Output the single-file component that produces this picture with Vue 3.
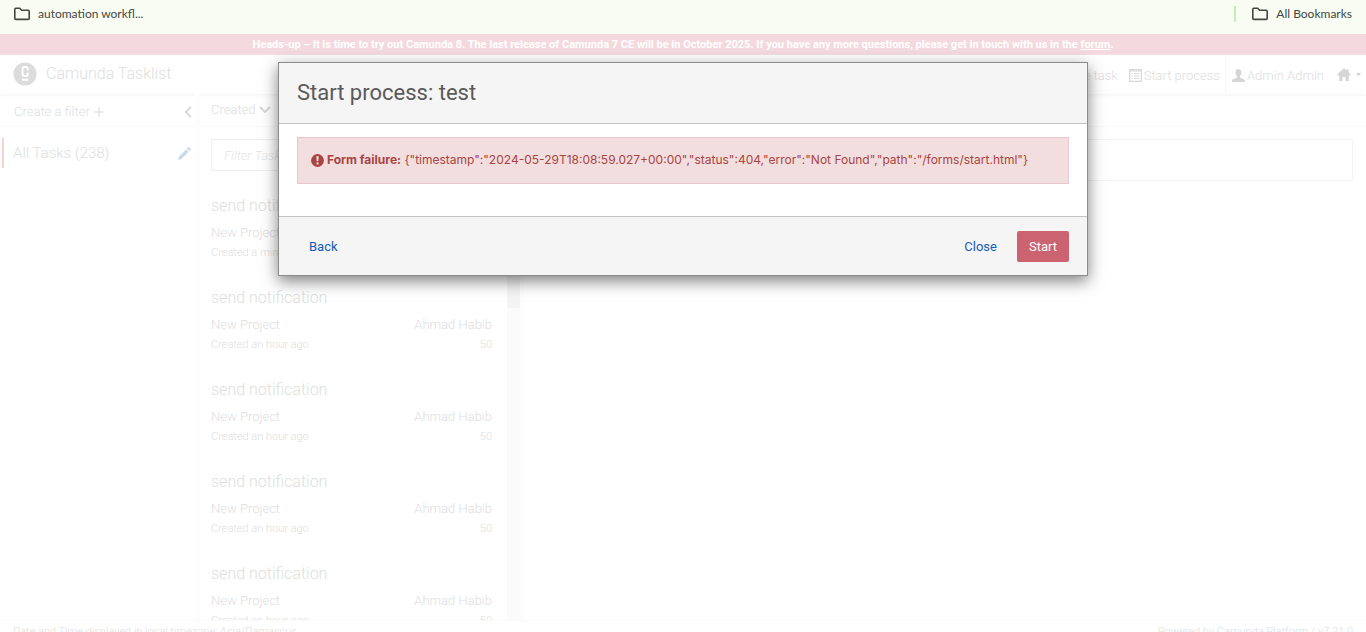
<script setup>
import { ref } from 'vue'

const query = ref('')
const tasks = [
  { name: 'send notification', process: 'New Project', assignee: 'Ahmad Habib', created: 'Created a minute ago', priority: 50 },
  { name: 'send notification', process: 'New Project', assignee: 'Ahmad Habib', created: 'Created an hour ago', priority: 50 },
  { name: 'send notification', process: 'New Project', assignee: 'Ahmad Habib', created: 'Created an hour ago', priority: 50 },
  { name: 'send notification', process: 'New Project', assignee: 'Ahmad Habib', created: 'Created an hour ago', priority: 50 },
  { name: 'send notification', process: 'New Project', assignee: 'Ahmad Habib', created: 'Created an hour ago', priority: 50 }
]
const failure = '{"timestamp":"2024-05-29T18:08:59.027+00:00","status":404,"error":"Not Found","path":"/forms/start.html"}'
</script>

<template>
  <div class="window">
    <nav class="bookmarks" aria-label="Bookmarks">
      <button type="button" class="bookmark">
        <svg width="18" height="14" viewBox="0 0 18 14"><path d="M1.8 2.2q0-1 1-1h4l1.8 2h6.600q1 0 1 1v7.200q0 1-1 1H2.800q-1 0-1-1z" fill="none" stroke="#454743" stroke-width="1.600" /></svg>
        <span>automation workfl...</span>
      </button>
      <button type="button" class="bookmark all">
        <svg width="18" height="14" viewBox="0 0 18 14"><path d="M1.8 2.2q0-1 1-1h4l1.800 2h6.600q1 0 1 1v7.200q0 1-1 1H2.800q-1 0-1-1z" fill="none" stroke="#454743" stroke-width="1.600" /></svg>
        <span>All Bookmarks</span>
      </button>
    </nav>

    <div class="app">
      <p class="notice">
        Heads-up – it is time to try out Camunda 8. The last release of Camunda 7 CE will be in October 2025. If you have any more questions, please get in touch with us in the <a href="#">forum</a>.
      </p>

      <header class="topbar">
        <a class="brand" href="#">
          <svg width="24" height="24" viewBox="0 0 24 24">
            <circle cx="12" cy="12" r="11.500" fill="#dcdcdc" />
            <path d="M14.700 8.500V6.700q0-1.700-1.700-1.700h-1.600q-1.800 0-1.800 1.700v5.600q0 1.700 1.800 1.700H13q1.700 0 1.700-1.700v-1.700M9 17.800h6.300" fill="none" stroke="#fff" stroke-width="1.900" />
          </svg>
          <span>Camunda Tasklist</span>
        </a>
        <nav class="actions" aria-label="Main">
          <a href="#" class="action">
            <svg width="13" height="13" viewBox="0 0 13 13"><path d="M1 1h11v11H1zM4 4h6M4 6.500h6M4 9h6" fill="none" stroke="#dedede" /></svg>
            <span>Create task</span>
          </a>
          <a href="#" class="action process">
            <svg width="13" height="13" viewBox="0 0 13 13"><path d="M.6.600h11.800v11.800H.600zM.6 2h11.800" fill="none" stroke="#d8d8d8" stroke-width="1.200" /><path d="M2.500 4.500h1.200M5 4.500h5.500M2.500 7h1.200M5 7h5.500M2.500 9.500h1.200M5 9.500h5.500" stroke="#d8d8d8" stroke-width="1.200" /></svg>
            <span>Start process</span>
          </a>
          <a href="#" class="action user">
            <svg width="13" height="13" viewBox="0 0 13 13"><path d="M6.500 0C8.500 0 9.600 1.300 9.500 3.400 9.400 5 8.800 6.200 8 6.900v1.300c0 .9 4.600 1.400 4.900 3.200V13H.1v-1.600C.4 9.600 5 9.100 5 8.200V6.900C4.200 6.200 3.600 5 3.500 3.400 3.400 1.300 4.500 0 6.500 0z" fill="#d6d6d6" /></svg>
            <span>Admin Admin</span>
          </a>
          <button type="button" class="home" aria-label="Applications">
            <svg width="14" height="13" viewBox="0 0 14 13"><path d="M7 0l2.500 2.400V1h2v3.300L14 6.800l-.7.700h-1.500V13H8.500V9h-3v4H2.200V7.500H.7L0 6.800z" fill="#d6d6d6" /></svg>
            <svg width="5" height="3" viewBox="0 0 5 3"><path d="M0 0h5L2.500 3z" fill="#d0d0d0" /></svg>
          </button>
        </nav>
      </header>

      <main class="columns">
        <aside class="filters">
          <div class="column-head">
            <button type="button" class="plain">Create a filter
              <svg width="10" height="10" viewBox="0 0 10 10"><path d="M5 0v10M0 5h10" stroke="#dcdcdc" stroke-width="1.200" /></svg>
            </button>
            <button type="button" class="plain" aria-label="Collapse filters">
              <svg width="8" height="12" viewBox="0 0 8 12"><path d="M7 .8L1.800 6 7 11.200" fill="none" stroke="#d6d6d6" stroke-width="1.800" /></svg>
            </button>
          </div>
          <div class="filter">
            <a href="#">All Tasks (238)</a>
            <button type="button" class="plain" aria-label="Edit filter">
              <svg width="13" height="13" viewBox="0 0 13 13"><path d="M0 13l1-3.400L8.200 2.400l2.400 2.400L3.400 12zM9 1.600L10.400.200q.4-.3.800 0l1.600 1.600q.3.400 0 .8L11.400 4z" fill="#cbd8ea" /></svg>
            </button>
          </div>
        </aside>

        <section class="list">
          <div class="column-head">
            <button type="button" class="plain sort">Created
              <svg width="12" height="8" viewBox="0 0 12 8"><path d="M1 1l5 5 5-5" fill="none" stroke="#d6d6d6" stroke-width="1.900" /></svg>
            </button>
          </div>
          <div class="list-body">
            <div class="tasks">
              <input v-model="query" class="search" type="text" aria-label="Filter Tasks" placeholder="Filter Tasks">
              <ul>
                <li v-for="(task, i) in tasks" :key="i">
                  <h4>{{ task.name }}</h4>
                  <div class="row"><span>{{ task.process }}</span><span>{{ task.assignee }}</span></div>
                  <div class="row small"><span>{{ task.created }}</span><span>{{ task.priority }}</span></div>
                </li>
              </ul>
            </div>
            <div class="track"><div class="thumb"></div></div>
          </div>
        </section>

        <section class="detail">
          <div class="column-head"></div>
          <div class="empty"></div>
        </section>
      </main>

      <footer class="footer">
        <span>Date and Time displayed in local timezone: Asia/Damascus</span>
        <span>Powered by <a href="#">Camunda Platform</a> / v7.21.0</span>
      </footer>
    </div>

    <div class="dialog" role="dialog" aria-labelledby="dialog-title">
      <div class="dialog-head"><h3 id="dialog-title">Start process: test</h3></div>
      <div class="dialog-body">
        <div class="alert" role="alert">
          <svg width="13" height="13" viewBox="0 0 13 13"><circle cx="6.500" cy="6.500" r="6.400" fill="#a94442" /><path d="M5.300 2.300h2.400l-.4 5H5.700zM5.500 8.600h2v2h-2z" fill="#f2dede" /></svg>
          <p><strong>Form failure:</strong> {{ failure }}</p>
        </div>
      </div>
      <div class="dialog-foot">
        <button type="button" class="btn link">Back</button>
        <div class="right">
          <button type="button" class="btn link">Close</button>
          <button type="button" class="btn primary">Start</button>
        </div>
      </div>
    </div>
  </div>
</template>

<style>
body {
  background: #fff;
}
</style>

<style scoped>
* {
  box-sizing: border-box;
}
.window {
  position: relative;
  display: flex;
  flex-direction: column;
  height: 100vh;
  overflow: hidden;
  font-family: Roboto, "Liberation Sans", sans-serif;
  font-size: 13px;
  line-height: 18px;
}
button {
  border: 0;
  background: none;
  padding: 0;
  font: inherit;
  color: inherit;
}
a {
  color: inherit;
  text-decoration: none;
}
h3,
h4,
p,
ul {
  margin: 0;
  padding: 0;
  font-weight: 300;
  list-style: none;
}
svg {
  flex: none;
}
.bookmarks {
  display: flex;
  justify-content: space-between;
  align-items: center;
  flex: none;
  height: 34px;
  padding: 0 14px 6px 13px;
  background: #f8fcf2;
  color: #454743;
  font-family: Lato, "Open Sans", sans-serif;
  font-size: 12px;
}
.bookmark {
  display: flex;
  align-items: center;
  gap: 7px;
}
.all {
  padding-left: 15px;
  border-left: 2px solid #c5ecb8;
  line-height: 16px;
}
.app {
  display: flex;
  flex-direction: column;
  flex: 1;
  min-height: 0;
  color: #dedede;
  font-weight: 300;
}
.notice {
  flex: none;
  padding: 0 12px;
  height: 21px;
  line-height: 22px;
  background: #f4dade;
  color: #fff;
  font-size: 11px;
  font-weight: 700;
  text-align: center;
}
.notice a {
  text-decoration: underline;
}
.topbar {
  display: flex;
  justify-content: space-between;
  flex: none;
  height: 39px;
  padding: 0 5px 0 13px;
  box-shadow: 0 1px 3px #f2f2f2;
}
.brand {
  display: flex;
  align-items: center;
  gap: 9px;
  padding-bottom: 1px;
  font-size: 16px;
}
.actions {
  display: flex;
}
.action {
  display: flex;
  align-items: center;
  gap: 2px;
  padding-top: 2px;
}
.process {
  padding-left: 11px;
  padding-right: 5px;
}
.user {
  padding-left: 6px;
  border-left: 1px solid #f7f7f7;
}
.home {
  display: flex;
  align-items: center;
  gap: 5px;
  padding-left: 13px;
}
.columns {
  display: flex;
  flex: 1;
  min-height: 0;
}
.filters {
  flex: none;
  width: 200px;
  border-right: 6px solid #fdfdfd;
}
.list {
  display: flex;
  flex-direction: column;
  flex: none;
  width: 324px;
  border-right: 4px solid #fdfdfd;
}
.detail {
  flex: 1;
}
.column-head {
  display: flex;
  justify-content: space-between;
  align-items: center;
  flex: none;
  height: 33px;
  padding: 3px 2px 0 14px;
  border-bottom: 1px solid #f9f9f9;
}
.list .column-head {
  padding: 0 11px;
}
.plain {
  display: flex;
  align-items: center;
  gap: 4px;
}
.sort {
  gap: 3px;
}
.filter {
  display: flex;
  justify-content: space-between;
  align-items: center;
  margin-top: 11px;
  margin-left: 2px;
  height: 30px;
  padding: 0 3px 0 9px;
  border-left: 2px solid #f4d3d8;
  font-size: 15px;
}
.list-body {
  display: flex;
  flex: 1;
  min-height: 0;
}
.tasks {
  flex: 1;
  min-width: 0;
  padding: 12px 15px 0 11px;
  overflow: hidden;
}
.search {
  display: block;
  width: 100%;
  height: 32px;
  padding: 0 12px;
  border: 1px solid #efefef;
  background: #fff;
  font: italic 300 13px Roboto, sans-serif;
}
.search::placeholder {
  color: #e6e6e6;
}
.tasks ul {
  margin-top: 23px;
}
.tasks li {
  height: 92px;
}
.tasks h4 {
  font-size: 16px;
  line-height: 24px;
}
.row {
  display: flex;
  justify-content: space-between;
  margin-top: 6px;
}
.small {
  margin-top: 2px;
  font-size: 11px;
}
.track {
  flex: none;
  width: 13px;
  background: #fbfbfb;
}
.thumb {
  height: 181px;
  background: #f4f4f4;
}
.detail .column-head {
  padding: 0;
}
.empty {
  height: 42px;
  margin: 12px 13px 0;
  border: 1px solid #f3f3f3;
}
.footer {
  display: flex;
  justify-content: space-between;
  flex: none;
  height: 12px;
  padding: 2px 13px 0;
  border-top: 1px solid #fafafa;
  font-size: 11px;
}
.footer a {
  color: #d5deee;
}
.dialog {
  position: absolute;
  top: 62px;
  left: 50%;
  width: 810px;
  max-width: 100%;
  transform: translateX(-50%);
  border: 1px solid #8c8c8c;
  background: #fff;
  box-shadow: 0 5px 15px rgba(0, 0, 0, 0.5);
}
.dialog-head {
  padding: 15px 18px;
  border-bottom: 1px solid #c4c4c4;
  background: #f5f5f5;
}
.dialog-head h3 {
  color: #5a5a5a;
  font-size: 22px;
  font-weight: 400;
  line-height: 30px;
}
.dialog-body {
  padding: 13px 18px 32px;
}
.alert {
  display: flex;
  align-items: center;
  gap: 3px;
  padding: 13px 13px 14px;
  border: 1px solid #e8c8cc;
  background: #f2dede;
  color: #a94442;
}
.alert p {
  font-family: Inter, Roboto, sans-serif;
  font-size: 12px;
  font-weight: 400;
}
.alert strong {
  font-weight: 700;
}
.dialog-foot {
  display: flex;
  justify-content: space-between;
  padding: 14px 18px 13px;
  border-top: 1px solid #c4c4c4;
  background: #f5f5f5;
}
.right {
  display: flex;
  gap: 8px;
}
.btn {
  height: 31px;
  padding: 0 12px;
  border-radius: 2px;
}
.link {
  color: #155cb5;
}
.primary {
  background: #cc6371;
  color: #fff;
}
</style>
